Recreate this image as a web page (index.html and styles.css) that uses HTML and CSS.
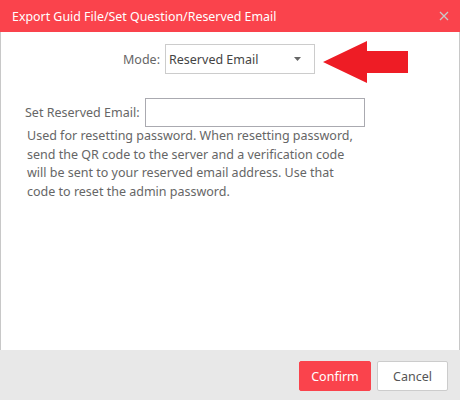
FILE: index.html
```html
<!DOCTYPE html>
<html>
<head>
<meta charset="utf-8">
<link rel="stylesheet" href="styles.css">
</head>
<body>
<div class="dialog">
  <div class="titlebar">
    <span class="title">Export Guid File/Set Question/Reserved Email</span>
    <svg class="close" width="10" height="10" viewBox="0 0 10 10"><path d="M1 1L9 9M9 1L1 9" stroke="#c8c8c8" stroke-width="1.3"/></svg>
  </div>
  <div class="content">
    <div class="mode-row">
      <span class="label">Mode:</span>
      <div class="select">
        <span>Reserved Email</span>
        <svg class="caret" width="7" height="4" viewBox="0 0 7 4"><path d="M0 0H7L3.5 4Z" fill="#666"/></svg>
      </div>
      <svg class="arrow" width="90" height="44" viewBox="0 0 90 44"><path d="M0 21L44 0V10H85V32H44V42Z" fill="#ee1c25"/></svg>
    </div>
    <div class="email-row">
      <span class="label">Set Reserved Email:</span>
      <div class="input"></div>
    </div>
    <p class="hint">Used for resetting password. When resetting password, send the QR code to the server and a verification code will be sent to your reserved email address. Use that code to reset the admin password.</p>
  </div>
  <div class="footer">
    <button class="btn primary">Confirm</button>
    <button class="btn">Cancel</button>
  </div>
</div>
</body>
</html>
```
FILE: styles.css
```css
html, body { margin: 0; padding: 0; }
body { font-family: "Noto Sans", "Open Sans", sans-serif; font-size: 12.5px; color: #666; }
.dialog { width: 460px; height: 400px; display: flex; flex-direction: column; }
.titlebar { height: 32px; background: #fa434c; display: flex; align-items: center; justify-content: space-between; padding: 0 11px 0 12px; color: #fff; }
.title { font-size: 12.4px; }
.close { display: block; }
.content { flex: 1; border-left: 1px solid #c8c8c8; border-right: 1px solid #c8c8c8; background: #fff; position: relative; }
.mode-row { display: flex; align-items: center; margin-top: 12px; padding-left: 122px; }
.mode-row .label { margin-right: 5px; }
.select { height: 28px; border: 1px solid #ccc; display: flex; align-items: center; justify-content: space-between; padding: 0 13px 0 3px; width: 132px; color: #444; }
.caret { display: block; }
.arrow { position: absolute; left: 322px; top: 9px; }
.email-row { display: flex; align-items: center; margin-top: 24px; padding-left: 24px; }
.email-row .label { width: 120px; }
.input { width: 218px; height: 27px; border: 1px solid #aaaab0; }
.hint { margin: 0 0 0 26px; width: 328px; line-height: 18.5px; }
.footer { height: 50px; background: #e8e8e8; display: flex; justify-content: flex-end; align-items: flex-start; padding: 11px 12px 0 0; box-sizing: border-box; gap: 6px; }
.btn { font-family: inherit; font-size: 12.5px; height: 30px; border-radius: 2px; border: 1px solid #ccc; background: #fff; color: #555; width: 71px; padding: 0; }
.btn.primary { background: #fa434c; border-color: #fa434c; color: #fff; width: 72px; }
```
